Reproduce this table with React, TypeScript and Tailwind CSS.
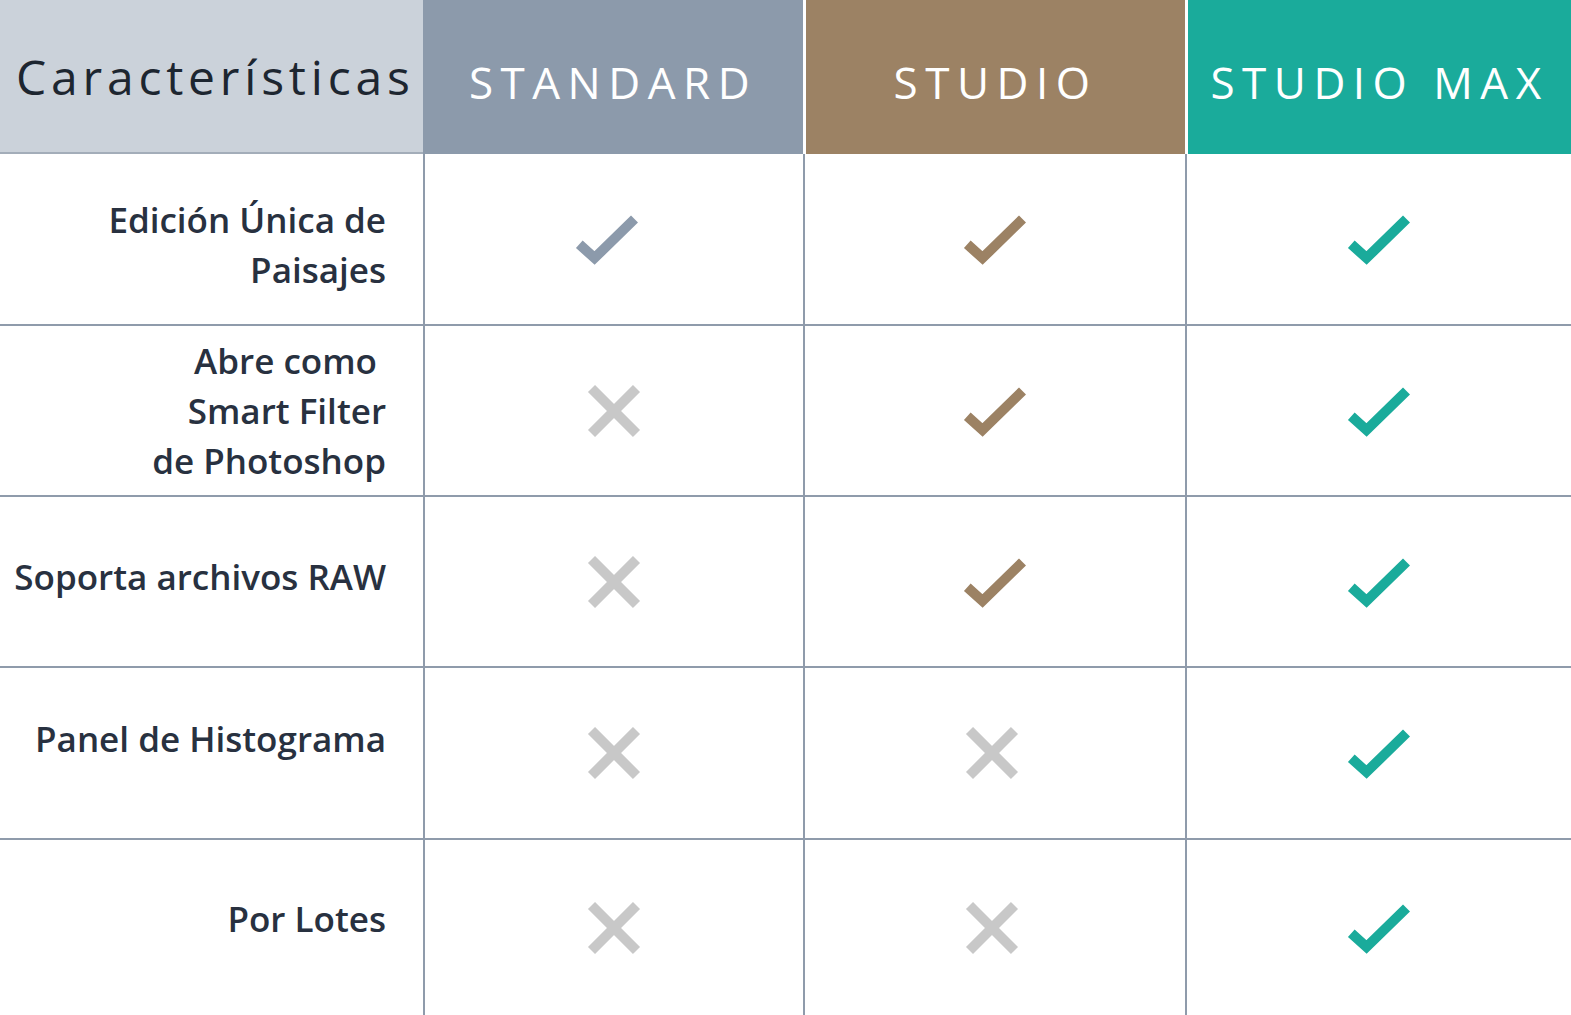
const LINE = "border-[#8f9bab]";

type Mark = "check" | "cross";

const Check = ({ color, className }: { color: string; className?: string }) => (
  <svg width="64" height="52" viewBox="0 0 64 52" className={className}>
    <polyline
      points="4.3,31.3 19.5,45 59.5,6"
      fill="none"
      stroke={color}
      strokeWidth="10"
      strokeLinecap="butt"
      strokeLinejoin="miter"
    />
  </svg>
);

const Cross = ({ className }: { className?: string }) => (
  <svg width="54" height="54" viewBox="0 0 54 54" className={className}>
    <g stroke="#c8c8c8" strokeWidth="10" strokeLinecap="butt">
      <line x1="4.5" y1="4.5" x2="49.5" y2="49.5" />
      <line x1="49.5" y1="4.5" x2="4.5" y2="49.5" />
    </g>
  </svg>
);

const rows: {
  label: string[];
  marks: Mark[];
  rowClass: string;
  labelClass: string;
}[] = [
  {
    label: ["Edición Única de", "Paisajes"],
    marks: ["check", "check", "check"],
    rowClass: "h-[172px] border-b-2",
    labelClass: "pt-[12px]",
  },
  {
    label: ["Abre como\u00a0", "Smart Filter", "de Photoshop"],
    marks: ["cross", "check", "check"],
    rowClass: "h-[171px] border-b-2",
    labelClass: "pt-0",
  },
  {
    label: ["Soporta archivos RAW"],
    marks: ["cross", "check", "check"],
    rowClass: "h-[171px] border-b-2",
    labelClass: "pb-[9px]",
  },
  {
    label: ["Panel de Histograma"],
    marks: ["cross", "cross", "check"],
    rowClass: "h-[172px] border-b-2",
    labelClass: "pb-[28px]",
  },
  {
    label: ["Por Lotes"],
    marks: ["cross", "cross", "check"],
    rowClass: "h-[175px]",
    labelClass: "pb-[18px]",
  },
];

const colors = ["#8c9aab", "#9c8264", "#1aab9b"];

export default function App() {
  return (
    <div className="w-[1571px] h-[1015px] overflow-hidden bg-white font-['Open_Sans',sans-serif]">
      {/* encabezado */}
      <div className="grid grid-cols-[423px_380px_382px_386px] h-[154px]">
        <div className="flex items-center pl-[16px] pt-[2px] bg-[#cbd2da] border-b-2 border-[#a3adb9]">
          <span className="text-[48px] tracking-[4.8px] text-[#1d2630]">
            Características
          </span>
        </div>
        <div className="flex items-center justify-center pt-[10px] bg-[#8c9aab] text-white text-[44px] tracking-[7.5px]">
          STANDARD
        </div>
        <div className="flex items-center justify-center pt-[10px] bg-[#9c8264] border-l-[3px] border-white text-white text-[44px] tracking-[7.5px]">
          STUDIO
        </div>
        <div className="flex items-center justify-center pt-[10px] bg-[#1aab9b] border-l-[3px] border-white text-white text-[44px] tracking-[7.5px]">
          STUDIO MAX
        </div>
      </div>

      {rows.map((row, i) => (
        <div
          key={i}
          className={`grid grid-cols-[423px_380px_382px_386px] ${LINE} ${row.rowClass}`}
        >
          <div
            className={`flex items-center justify-end pr-[37px] text-right text-[35px] leading-[50px] font-semibold text-[#283140] ${row.labelClass}`}
          >
            <div>
              {row.label.map((l, j) => (
                <div key={j} className="whitespace-pre">
                  {l}
                </div>
              ))}
            </div>
          </div>
          {row.marks.map((m, j) => (
            <div
              key={j}
              className={`flex items-center justify-center border-l-2 ${LINE}`}
            >
              {m === "check" ? (
                <Check
                  color={colors[j]}
                  className={j === 0 ? "mr-[14px]" : ""}
                />
              ) : (
                <Cross className={j === 1 ? "mr-[6px]" : ""} />
              )}
            </div>
          ))}
        </div>
      ))}
    </div>
  );
}
